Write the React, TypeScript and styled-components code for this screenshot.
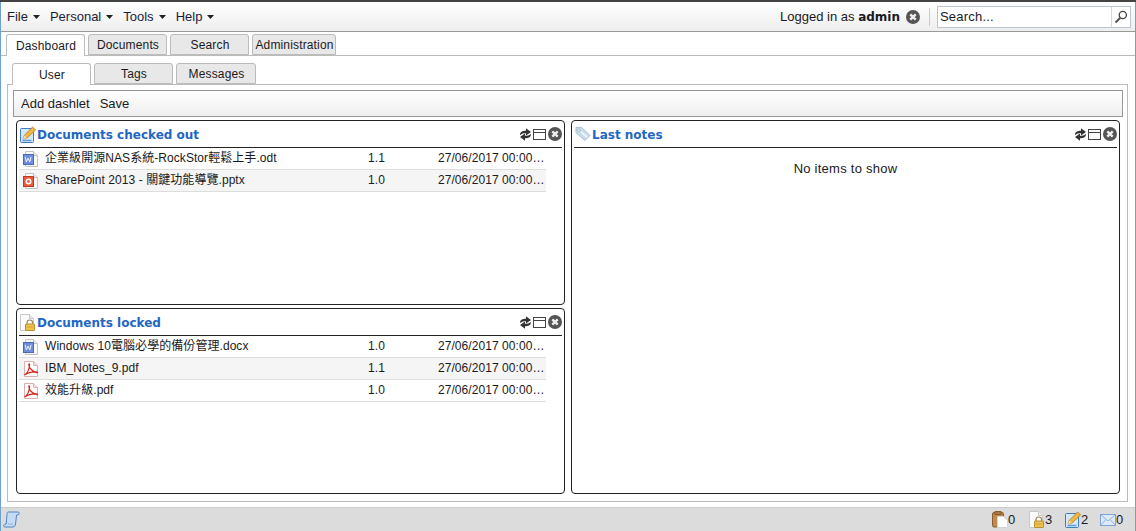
import React from 'react';
import styled, { createGlobalStyle } from 'styled-components';

const GlobalStyle = createGlobalStyle`
  html, body {
    margin: 0;
    padding: 0;
    background: #fff;
  }
  body {
    font-family: "Liberation Sans", "Noto Sans CJK TC", Arial, sans-serif;
    font-size: 12px;
    color: #1a1a22;
  }
`;

function Caret() {
  return (
    <svg width="7" height="4" viewBox="0 0 7 4">
      <path d="M0 0h7L3.5 4z" fill="#222" />
    </svg>
  );
}

function CloseIcon() {
  return (
    <svg width="14" height="14" viewBox="0 0 14 14">
      <circle cx="7" cy="7" r="7" fill="#555" />
      <path d="M4.3 4.3l5.4 5.4M9.700 4.300l-5.400 5.400" stroke="#eee" strokeWidth="2.4" />
    </svg>
  );
}

function RefreshIcon() {
  return (
    <svg width="11" height="13" viewBox="0 0 11 13">
      <path d="M0 7C0 3.800 2.400 2.800 6 2.800V0.300L11 4 6 7.400V5.200C3.600 5.200 1.800 5.600 0 7z" fill="#333" />
      <path d="M11 6C11 9.200 8.600 10.200 5 10.200V12.700L0 9 5 5.600V7.800C7.400 7.800 9.200 7.400 11 6z" fill="#333" />
    </svg>
  );
}

function WindowIcon() {
  return (
    <svg width="13" height="11" viewBox="0 0 13 11">
      <rect x="0.5" y="0.5" width="12" height="10" fill="#fff" stroke="#444" />
      <path d="M0.5 3.5h12" stroke="#444" />
    </svg>
  );
}

function SearchGlass() {
  return (
    <svg width="14" height="14" viewBox="0 0 14 14">
      <circle cx="8.8" cy="5" r="3.6" fill="#fff" stroke="#444" strokeWidth="1.3" />
      <path d="M6.3 7.7L1.5 12.5" stroke="#555" strokeWidth="2" />
    </svg>
  );
}

function DocSheet() {
  return (
    <>
      <path d="M2.5 0.5h8l4 4v11h-12z" fill="#fafafa" stroke="#c4c4c4" />
      <path d="M10.500 0.500v4h4" fill="#eee" stroke="#c4c4c4" />
    </>
  );
}

function WordIcon() {
  return (
    <svg width="16" height="16" viewBox="0 0 16 16">
      <DocSheet />
      <rect x="0.5" y="3.5" width="10" height="10" fill="#6f8fdc" stroke="#4a69b8" />
      <path d="M2.200 5.800l1.200 5 1.700-3.600 1.700 3.600 1.200-5" fill="none" stroke="#fff" strokeWidth="0.9" />
    </svg>
  );
}

function PptIcon() {
  return (
    <svg width="16" height="16" viewBox="0 0 16 16">
      <DocSheet />
      <rect x="0.5" y="3.5" width="10" height="10" fill="#e8583a" stroke="#c23b20" />
      <circle cx="5.5" cy="8.5" r="3" fill="#fff" />
      <circle cx="5.5" cy="8.5" r="1.4" fill="#e8583a" />
    </svg>
  );
}

function PdfIcon() {
  return (
    <svg width="16" height="16" viewBox="0 0 16 16">
      <path d="M1.500 0.500h9l4 4v11h-13z" fill="#fff" stroke="#d9b0b0" />
      <path d="M10.500 0.500v4h4" fill="#f3e0e0" stroke="#d9b0b0" />
      <path
        d="M1.500 14C4 12.500 6.300 8 6.600 3.500c.1-1-.8-1-.8 0 0 3 3 7 8 8.200 1 .2 1-.8 0-.8-4-.3-9 .8-12.300 3.100"
        fill="none"
        stroke="#d8261c"
        strokeWidth="1.2"
      />
    </svg>
  );
}

function EditDocIcon() {
  return (
    <svg width="16" height="17" viewBox="0 0 16 17">
      <rect x="0.5" y="2.5" width="13" height="14" rx="1" fill="#d6e7fa" stroke="#3f7cc4" />
      <path d="M2.500 14.500h9" stroke="#5aa0e0" strokeWidth="1.5" />
      <path d="M3 13l1.200-3.600L12.600 1 15.600 4 7 12z" fill="#f0b840" stroke="#b07a20" strokeWidth="0.8" />
      <path d="M3 13l1.200-3.600L7 12z" fill="#f6dfb0" />
    </svg>
  );
}

function LockDocIcon() {
  return (
    <svg width="16" height="17" viewBox="0 0 16 17">
      <path d="M0.500 0.500h9l4 4v12h-13z" fill="#fbfbfb" stroke="#c8c8c8" />
      <path d="M9.500 0.500v4h4" fill="#eee" stroke="#c8c8c8" />
      <path d="M7 10V8.800a2.800 2.800 0 0 1 5.600 0V10" fill="none" stroke="#9a8a60" strokeWidth="1.2" />
      <rect x="5.5" y="10" width="9" height="6.5" rx="0.5" fill="#efc050" stroke="#b89030" />
      <path d="M6.500 13h7" stroke="#d9a437" />
    </svg>
  );
}

function TagIcon() {
  return (
    <svg width="16" height="16" viewBox="0 0 17 16">
      <path d="M1 1h6l9 8.500-5.500 5.500L1 6.500z" fill="#c5dcf0" stroke="#aebccb" />
      <circle cx="4" cy="4" r="1.3" fill="#fff" stroke="#8a9aa8" strokeWidth="0.7" />
      <path d="M6 5.500l7 6" stroke="#eef5fb" strokeWidth="2" />
    </svg>
  );
}

function ClipboardIcon() {
  return (
    <svg width="17" height="17" viewBox="0 0 17 17">
      <rect x="1.5" y="1.5" width="11" height="14.500" rx="1.5" fill="#c08a50" stroke="#8a5c2c" />
      <rect x="4" y="0.5" width="6" height="3" fill="#a87840" stroke="#8a5c2c" />
      <path d="M6.500 5.500h6l4 4v7h-10z" fill="#fff" stroke="#d4d4d4" />
    </svg>
  );
}

function MailIcon() {
  return (
    <svg width="16" height="12" viewBox="0 0 16 12">
      <rect x="0.5" y="0.5" width="15" height="11" fill="#dbe9fa" stroke="#7fa3d4" />
      <path d="M0.500 0.500L8 7l7.500-6.500M0.500 11.500L6 5.500M15.500 11.500L10 5.500" fill="none" stroke="#8fb0dc" />
    </svg>
  );
}

function ScrollIcon() {
  return (
    <svg width="17" height="17" viewBox="0 0 17 17">
      <path
        d="M5 1h10c1 0 1.600 1 1 2-.4.700-1.400 1-2.400 1L12.500 13c-.2 1.700-1 3-2.500 3H2c-1.200 0-1.800-1-1.200-2 .4-.6 1.200-1 2.400-1L4 3.500C4.100 2 4.300 1.300 5 1z"
        fill="#c5dbf6"
        stroke="#4f86c6"
      />
      <path d="M5 13h5" stroke="#8fb6e2" />
    </svg>
  );
}

const Page = styled.div`
  width: 1136px;
  height: 531px;
  box-sizing: border-box;
  border-top: 2px solid #444;
  display: flex;
  flex-direction: column;
  overflow: hidden;
`;

const Frame = styled.div`
  flex: 1;
  min-height: 0;
  display: flex;
  flex-direction: column;
  border-left: 1px solid #6fa0d0;
  border-right: 1px solid #6fa0d0;
`;

const Toolbar = styled.div`
  height: 30px;
  flex: none;
  box-sizing: border-box;
  display: flex;
  align-items: center;
  padding: 0 4px 0 6px;
  background: linear-gradient(#fff, #eee);
  border-bottom: 1px solid #999;
`;

const Menu = styled.div`
  display: flex;
  align-items: center;
  gap: 5px;
  margin-right: 10px;
  font-size: 13px;
  color: #1c1c3a;
`;

const Spacer = styled.div`
  flex: 1;
`;

const LoggedIn = styled.span`
  font-size: 13px;
  margin-right: 6px;

  & b {
    font-family: "DejaVu Sans", Verdana, sans-serif;
    font-size: 12px;
    font-weight: bold;
  }
`;

const Divider = styled.div`
  width: 1px;
  height: 18px;
  background: #ccc;
  margin: 0 7px 0 9px;
`;

const SearchBox = styled.div`
  width: 194px;
  height: 22px;
  box-sizing: border-box;
  display: flex;
  align-items: center;
  background: #fff;
  border: 1px solid #bcc4d0;
`;

const SearchText = styled.span`
  flex: 1;
  padding-left: 2px;
  font-size: 13px;
  letter-spacing: 0.2px;
`;

const SearchButton = styled.div`
  width: 18px;
  height: 100%;
  display: flex;
  align-items: center;
  justify-content: center;
  border-left: 1px solid #d4d8de;
`;

const TabStrip = styled.div<{ $top: number; $left: number }>`
  flex: none;
  display: flex;
  gap: 3px;
  padding: ${(p) => p.$top}px 0 0 ${(p) => p.$left}px;
  height: 21px;
`;

const Tab = styled.div<{ $active?: boolean; $width: number }>`
  width: ${(p) => p.$width}px;
  box-sizing: border-box;
  height: ${(p) => (p.$active ? 22 : 21)}px;
  display: flex;
  align-items: center;
  justify-content: center;
  padding-left: 1px;
  font-size: 12px;
  letter-spacing: 0.15px;
  border: 1px solid #bbb;
  border-bottom: ${(p) => (p.$active ? 'none' : '1px solid #bbb')};
  border-radius: 3px 3px 0 0;
  background: ${(p) => (p.$active ? '#fff' : '#e8e8e8')};
  position: relative;
  z-index: 1;
`;

const TabBody = styled.div`
  flex: 1;
  min-height: 0;
  display: flex;
  flex-direction: column;
  border-top: 1px solid #bbb;
  padding: 7px 6px 5px 6px;
`;

const InnerTabs = styled(TabStrip)`
  padding-left: 5px;
`;

const InnerBody = styled.div`
  flex: 1;
  min-height: 0;
  display: flex;
  flex-direction: column;
  gap: 3px;
  border: 1px solid #bbb;
  padding: 5px 4px 7px 5px;
  box-sizing: border-box;
  margin-right: 1px;
`;

const ActionBar = styled.div`
  height: 27px;
  flex: none;
  box-sizing: border-box;
  display: flex;
  align-items: center;
  gap: 10px;
  padding-left: 7px;
  border: 1px solid #999;
  background: linear-gradient(#fff, #eee);
  font-size: 13px;
`;

const Columns = styled.div`
  flex: 1;
  min-height: 0;
  display: grid;
  grid-template-columns: 549px 549px;
  gap: 6px;
  margin: 0 3px;
`;

const Stack = styled.div`
  display: flex;
  flex-direction: column;
  gap: 3px;
  min-height: 0;
`;

const Portlet = styled.section<{ $height?: number }>`
  flex: ${(p) => (p.$height ? `0 0 ${p.$height}px` : '1')};
  min-height: 0;
  box-sizing: border-box;
  background: #fff;
  border: 1px solid #222;
  border-radius: 4px;
  padding: 0 2px;
`;

const PortletHead = styled.header`
  height: 27px;
  box-sizing: border-box;
  display: flex;
  align-items: center;
  border-bottom: 1px solid #222;
  padding: 0 0 0 1px;
`;

const PortletTitle = styled.h3`
  flex: 1;
  margin: 2px 0 0 1px;
  font-family: "DejaVu Sans", Verdana, sans-serif;
  font-size: 12px;
  font-weight: bold;
  color: #1f67c2;
`;

const PortletTools = styled.div`
  display: flex;
  align-items: center;
  gap: 2px;
`;

const FileRow = styled.div<{ $alt?: boolean }>`
  width: 527px;
  height: 22px;
  box-sizing: border-box;
  display: grid;
  grid-template-columns: 22px 323px 70px 108px;
  align-items: center;
  padding-left: 4px;
  border-bottom: 1px solid #ddd;
  background: ${(p) => (p.$alt ? '#f5f5f5' : '#fff')};
  font-size: 12px;
`;

const FileIcon = styled.div`
  display: flex;
  align-items: center;
`;

const Cell = styled.div`
  white-space: nowrap;
  overflow: hidden;
  text-overflow: ellipsis;
  line-height: 14px;
  padding-bottom: 2px;
  letter-spacing: 0.06px;
`;

const Empty = styled.div`
  text-align: center;
  padding-top: 13px;
  font-size: 13px;
  letter-spacing: 0.25px;
`;

const StatusBar = styled.div`
  height: 24px;
  flex: none;
  display: flex;
  align-items: center;
  background: #dcdcdc;
  padding: 0 10px 0 2px;
  border-top: 1px solid #ccc;
  box-sizing: border-box;
`;

const StatusItem = styled.div<{ $width: number }>`
  display: flex;
  align-items: center;
  margin-left: 9px;
  font-size: 13px;
  width: ${(p) => p.$width}px;
`;

type Doc = { icon: React.ReactNode; name: string; version: string; date: string };

const checkedOut: Doc[] = [
  { icon: <WordIcon />, name: '企業級開源NAS系統-RockStor輕鬆上手.odt', version: '1.1', date: '27/06/2017 00:00:00' },
  { icon: <PptIcon />, name: 'SharePoint 2013 - 關鍵功能導覽.pptx', version: '1.0', date: '27/06/2017 00:00:00' },
];

const locked: Doc[] = [
  { icon: <WordIcon />, name: 'Windows 10電腦必學的備份管理.docx', version: '1.0', date: '27/06/2017 00:00:00' },
  { icon: <PdfIcon />, name: 'IBM_Notes_9.pdf', version: '1.1', date: '27/06/2017 00:00:00' },
  { icon: <PdfIcon />, name: '效能升級.pdf', version: '1.0', date: '27/06/2017 00:00:00' },
];

function Head({ icon, title }: { icon: React.ReactNode; title: string }) {
  return (
    <PortletHead>
      {icon}
      <PortletTitle>{title}</PortletTitle>
      <PortletTools>
        <RefreshIcon />
        <WindowIcon />
        <CloseIcon />
      </PortletTools>
    </PortletHead>
  );
}

function Rows({ docs }: { docs: Doc[] }) {
  return (
    <>
      {docs.map((d, i) => (
        <FileRow key={d.name} $alt={i % 2 === 1}>
          <FileIcon>{d.icon}</FileIcon>
          <Cell>{d.name}</Cell>
          <Cell>{d.version}</Cell>
          <Cell>{d.date}</Cell>
        </FileRow>
      ))}
    </>
  );
}

export default function App() {
  return (
    <>
      <GlobalStyle />
      <Page>
        <Frame>
          <Toolbar>
            {['File', 'Personal', 'Tools', 'Help'].map((m) => (
              <Menu key={m}>
                {m} <Caret />
              </Menu>
            ))}
            <Spacer />
            <LoggedIn>
              Logged in as <b>admin</b>
            </LoggedIn>
            <CloseIcon />
            <Divider />
            <SearchBox>
              <SearchText>Search...</SearchText>
              <SearchButton>
                <SearchGlass />
              </SearchButton>
            </SearchBox>
          </Toolbar>
          <TabStrip $top={2} $left={5}>
            <Tab $active $width={79}>Dashboard</Tab>
            <Tab $width={79}>Documents</Tab>
            <Tab $width={79}>Search</Tab>
            <Tab $width={84}>Administration</Tab>
          </TabStrip>
          <TabBody>
            <InnerTabs $top={0} $left={5}>
              <Tab $active $width={79}>User</Tab>
              <Tab $width={79}>Tags</Tab>
              <Tab $width={80}>Messages</Tab>
            </InnerTabs>
            <InnerBody>
              <ActionBar>
                <span>Add dashlet</span>
                <span>Save</span>
              </ActionBar>
              <Columns>
                <Stack>
                  <Portlet $height={185}>
                    <Head icon={<EditDocIcon />} title="Documents checked out" />
                    <Rows docs={checkedOut} />
                  </Portlet>
                  <Portlet>
                    <Head icon={<LockDocIcon />} title="Documents locked" />
                    <Rows docs={locked} />
                  </Portlet>
                </Stack>
                <Stack>
                  <Portlet>
                    <Head icon={<TagIcon />} title="Last notes" />
                    <Empty>No items to show</Empty>
                  </Portlet>
                </Stack>
              </Columns>
            </InnerBody>
          </TabBody>
          <StatusBar>
            <ScrollIcon />
            <Spacer />
            <StatusItem $width={29}><ClipboardIcon />0</StatusItem>
            <StatusItem $width={27}><LockDocIcon />3</StatusItem>
            <StatusItem $width={26}><EditDocIcon />2</StatusItem>
            <StatusItem $width={25}><MailIcon />0</StatusItem>
          </StatusBar>
        </Frame>
      </Page>
    </>
  );
}
